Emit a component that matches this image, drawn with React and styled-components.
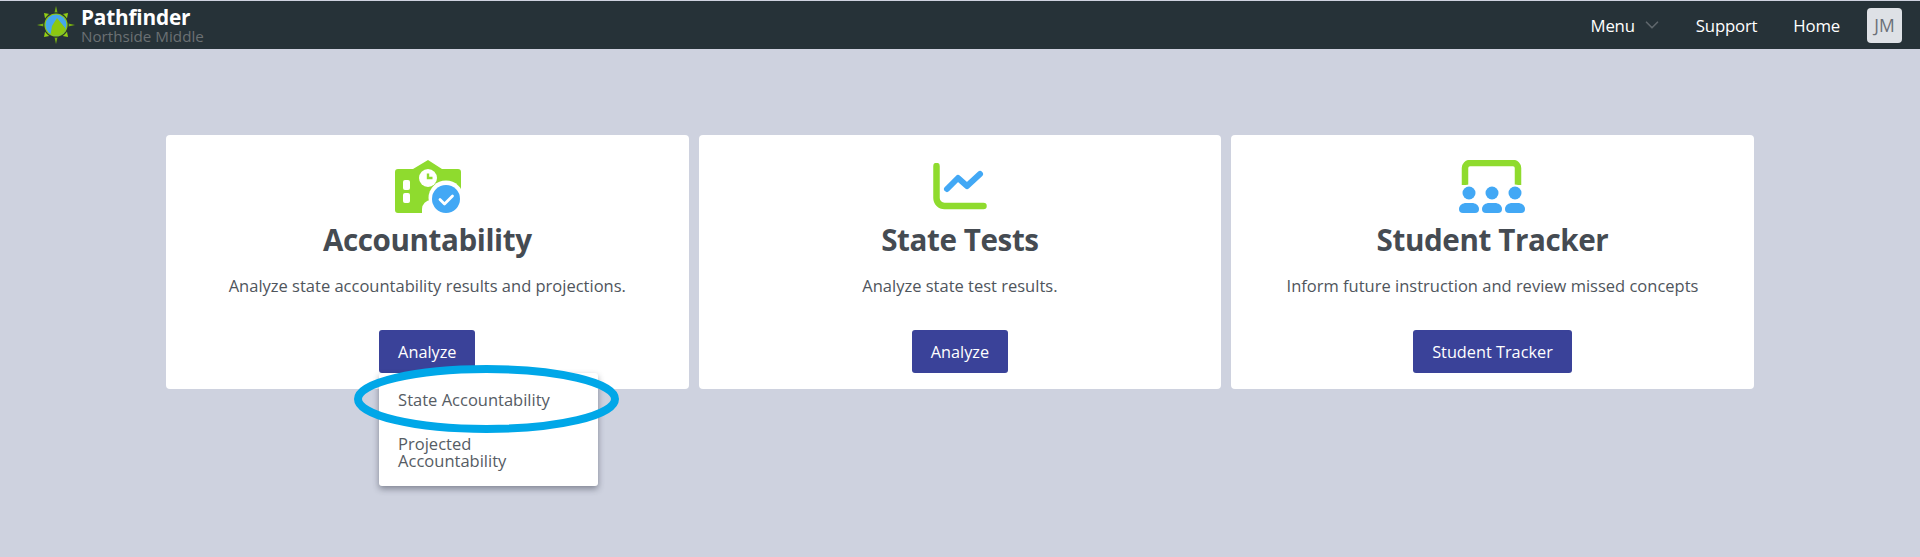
import React from 'react';
import styled, { createGlobalStyle } from 'styled-components';
import { ChevronDown } from 'lucide-react';

const GlobalStyle = createGlobalStyle`
  html, body {
    margin: 0;
    padding: 0;
    height: 100%;
    background: #ced2df;
    font-family: "Open Sans", "Noto Sans", "Liberation Sans", sans-serif;
    overflow: hidden;
  }
`;

const Page = styled.div`
  height: 557px;
  background: #ced2df;
`;

const NavBar = styled.header`
  height: 48px;
  margin-top: 1px;
  background: #263238;
  display: flex;
  align-items: center;
  justify-content: space-between;
  padding: 0 18px 0 37px;
`;

const Brand = styled.div`
  display: flex;
  align-items: center;
  gap: 6px;
`;

const BrandText = styled.div`
  display: flex;
  flex-direction: column;
`;

const BrandName = styled.span`
  color: #fff;
  font-size: 20.8px;
  font-weight: 700;
  line-height: 22px;
  letter-spacing: -0.2px;
`;

const BrandSchool = styled.span`
  color: #6b7073;
  font-size: 15.2px;
  font-weight: 400;
  line-height: 16px;
`;

const NavLinks = styled.nav`
  display: flex;
  align-items: center;
`;

const NavLink = styled.a`
  color: #fff;
  font-size: 16.8px;
  margin-right: ${(p) => p.$gap}px;
  display: flex;
  align-items: center;
  gap: 6px;
  letter-spacing: -0.2px;
`;

const Avatar = styled.div`
  width: 35px;
  height: 35px;
  border-radius: 4px;
  background: #dee1e6;
  color: #6b7078;
  font-size: 17.5px;
  display: flex;
  align-items: center;
  justify-content: center;
`;

const CardRow = styled.main`
  display: grid;
  grid-template-columns: repeat(3, 522.6px);
  gap: 10px;
  padding: 86px 0 0 166px;
`;

const Card = styled.section`
  height: 254px;
  background: #fff;
  border-radius: 4px;
  display: flex;
  flex-direction: column;
  align-items: center;
`;

const IconSlot = styled.div`
  height: 64px;
  margin-top: 19px;
  display: flex;
  align-items: center;
  justify-content: center;
`;

const BuildingSvg = styled.svg`
  margin-left: 2px;
`;

const CardTitle = styled.h2`
  margin: 2px 0 0;
  color: #454b52;
  font-size: 29.6px;
  font-weight: 700;
  line-height: 40px;
  letter-spacing: -0.4px;
`;

const CardText = styled.p`
  margin: 15px 0 0;
  color: #4f555c;
  font-size: 16.5px;
  line-height: 22px;
`;

const ButtonWrap = styled.div`
  position: relative;
  margin-top: 33px;
`;

const ActionButton = styled.button`
  height: 43px;
  padding: 0 19px;
  border: 0;
  border-radius: 3px;
  background: #3a4299;
  color: #fff;
  font-family: inherit;
  font-size: 16.3px;
`;

const Dropdown = styled.ul`
  position: absolute;
  z-index: 2;
  top: 43px;
  left: 0;
  width: 219px;
  height: 113px;
  box-sizing: border-box;
  margin: 0;
  padding: 18px 0 0;
  list-style: none;
  background: #fff;
  border-radius: 3px;
  box-shadow: 0 3px 6px rgba(40, 44, 60, 0.45);
`;

const DropdownItem = styled.li`
  color: #565c64;
  font-size: 16.5px;
  line-height: 17px;
  padding: ${(p) => p.$pad};
`;

const Highlight = styled.svg`
  position: absolute;
  z-index: 3;
  top: 35px;
  left: -25px;
  pointer-events: none;
`;

function BuildingIcon() {
  return (
    <BuildingSvg width="66" height="53" viewBox="0 0 66 53">
      <path d="M3 9H18L33 0L47 9H63a3 3 0 0 1 3 3V40H36a9 9 0 0 0-9 9v4H3a3 3 0 0 1-3-3V12a3 3 0 0 1 3-3z" fill="#8fdb2e" />
      <circle cx="33" cy="18" r="9" fill="#fff" />
      <path d="M33 13.5v4.5h4.5" fill="none" stroke="#8fdb2e" strokeWidth="2.4" />
      <rect x="8" y="20" width="7" height="10" rx="2" fill="#fff" />
      <rect x="8" y="33" width="7" height="10" rx="2" fill="#fff" />
      <circle cx="51" cy="38" r="17.5" fill="#fff" />
      <circle cx="51" cy="39" r="14" fill="#42a8f5" />
      <path d="M45 39.5l4.5 4.5 8-8" fill="none" stroke="#fff" strokeWidth="2.8" strokeLinecap="round" strokeLinejoin="round" />
    </BuildingSvg>
  );
}

function ChartIcon() {
  return (
    <svg width="54" height="47" viewBox="0 0 54 47">
      <path d="M3.5 3v32a8 8 0 0 0 8 8H50.5" fill="none" stroke="#8fdb2e" strokeWidth="6.5" strokeLinecap="round" />
      <path d="M14 26l11-11 9 8 13-12" fill="none" stroke="#42a8f5" strokeWidth="6" strokeLinecap="round" strokeLinejoin="round" />
    </svg>
  );
}

function ClassroomIcon() {
  return (
    <svg width="66" height="53" viewBox="0 0 66 53">
      <path d="M6 25V8a5 5 0 0 1 5-5h43a5 5 0 0 1 5 5v17" fill="none" stroke="#8fdb2e" strokeWidth="6.5" />
      {[10, 33, 56].map((cx) => (
        <g key={cx} fill="#42a8f5">
          <circle cx={cx} cy="33" r="8.5" fill="#fff" />
          <circle cx={cx} cy="33" r="6.5" />
          <path d={`M${cx - 6} 53a4 4 0 0 1-4-4c0-4 4-6 7-6h6c3 0 7 2 7 6a4 4 0 0 1-4 4z`} />
        </g>
      ))}
    </svg>
  );
}

function LogoIcon() {
  return (
    <svg width="38" height="38" viewBox="0 0 38 38">
      <defs>
        <clipPath id="logo-disc">
          <circle cx="19" cy="19" r="10.5" />
        </clipPath>
      </defs>
      <g fill="#7ab30f">
        <path d="M19 0l2 9h-4z" />
        <path d="M19 38l2-9h-4z" />
        <path d="M0 19l9-2v4z" />
        <path d="M38 19l-9-2v4z" />
      </g>
      <g fill="#93cf12">
        <path d="M7 7l8 1.5-6.5 6.5z" />
        <path d="M31 7l-8 1.5 6.5 6.5z" />
        <path d="M7 31l8-1.5-6.5-6.5z" />
        <path d="M31 31l-8-1.5 6.5-6.5z" />
      </g>
      <circle cx="19" cy="19" r="12.8" fill="#263238" />
      <circle cx="19" cy="19" r="11.6" fill="#8cc811" />
      <circle cx="19" cy="19" r="10.5" fill="#46a7ee" />
      <path d="M13 32l2-12 5-8 9 11-2 9z" fill="#8cc811" clipPath="url(#logo-disc)" />
    </svg>
  );
}

const cards = [
  { title: 'Accountability', text: 'Analyze state accountability results and projections.', action: 'Analyze', icon: <BuildingIcon />, open: true },
  { title: 'State Tests', text: 'Analyze state test results.', action: 'Analyze', icon: <ChartIcon /> },
  { title: 'Student Tracker', text: 'Inform future instruction and review missed concepts', action: 'Student Tracker', icon: <ClassroomIcon /> },
];

export default function App() {
  return (
    <Page>
      <GlobalStyle />
      <NavBar>
        <Brand>
          <LogoIcon />
          <BrandText>
            <BrandName>Pathfinder</BrandName>
            <BrandSchool>Northside Middle</BrandSchool>
          </BrandText>
        </Brand>
        <NavLinks>
          <NavLink $gap={33}>
            Menu <ChevronDown size={22} color="#5f676c" strokeWidth={1.8} />
          </NavLink>
          <NavLink $gap={36}>Support</NavLink>
          <NavLink $gap={27}>Home</NavLink>
          <Avatar>JM</Avatar>
        </NavLinks>
      </NavBar>
      <CardRow>
        {cards.map((card) => (
          <Card key={card.title}>
            <IconSlot>{card.icon}</IconSlot>
            <CardTitle>{card.title}</CardTitle>
            <CardText>{card.text}</CardText>
            <ButtonWrap>
              <ActionButton>{card.action}</ActionButton>
              {card.open && (
                <>
                  <Dropdown>
                    <DropdownItem $pad="0 19px 27px">State Accountability</DropdownItem>
                    <DropdownItem $pad="0 19px">Projected Accountability</DropdownItem>
                  </Dropdown>
                  <Highlight width="265" height="68" viewBox="0 0 265 68">
                    <ellipse cx="132.5" cy="34" rx="128.5" ry="30" fill="none" stroke="#00a7e8" strokeWidth="8" />
                  </Highlight>
                </>
              )}
            </ButtonWrap>
          </Card>
        ))}
      </CardRow>
    </Page>
  );
}
